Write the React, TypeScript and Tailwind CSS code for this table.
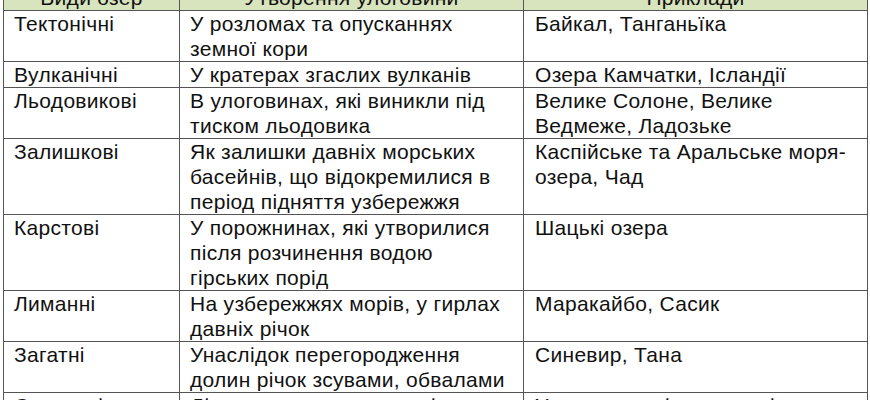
const rows: [string[], string[], string[]][] = [
  [["Тектонічні"], ["У розломах та опусканнях", "земної кори"], ["Байкал, Танганьїка"]],
  [["Вулканічні"], ["У кратерах згаслих вулканів"], ["Озера Камчатки, Ісландії"]],
  [["Льодовикові"], ["В улоговинах, які виникли під", "тиском льодовика"], ["Велике Солоне, Велике", "Ведмеже, Ладозьке"]],
  [["Залишкові"], ["Як залишки давніх морських", "басейнів, що відокремилися в", "період підняття узбережжя"], ["Каспійське та Аральське моря-", "озера, Чад"]],
  [["Карстові"], ["У порожнинах, які утворилися", "після розчинення водою", "гірських порід"], ["Шацькі озера"]],
  [["Лиманні"], ["На узбережжях морів, у гирлах", "давніх річок"], ["Маракайбо, Сасик"]],
  [["Загатні"], ["Унаслідок перегородження", "долин річок зсувами, обвалами"], ["Синевир, Тана"]],
  [["Старичні"], ["Ділянки старого русла річки"], ["У заплавах рівнинних річок"]],
];

function Lines({ lines }: { lines: string[] }) {
  return (
    <>
      {lines.map((l, i) => (
        <div key={i} className="whitespace-nowrap">{l}</div>
      ))}
    </>
  );
}

export default function App() {
  return (
    <div className="w-[870px] h-[400px] overflow-hidden bg-white pl-[3px]">
      <table
        className="-mt-[16px] border-collapse text-[21px] leading-[25px] tracking-[0.3px] text-[#111111]"
        style={{ fontFamily: '"Liberation Sans", Arial, sans-serif' }}
      >
        <colgroup>
          <col className="w-[176px]" />
          <col className="w-[344px]" />
          <col className="w-[344px]" />
        </colgroup>
        <thead>
          <tr className="bg-[#d7e4bd]">
            <th className="border border-[#555555] font-normal text-center p-0">Види озер</th>
            <th className="border border-[#555555] font-normal text-center p-0">Утворення улоговини</th>
            <th className="border border-[#555555] font-normal text-center p-0">Приклади</th>
          </tr>
        </thead>
        <tbody>
          {rows.map(([a, b, c], i) => (
            <tr key={i}>
              <td className="border border-[#555555] align-top pl-[10px] p-0">
                <Lines lines={a} />
              </td>
              <td className="border border-[#555555] align-top pl-[10px] p-0">
                <Lines lines={b} />
              </td>
              <td className="border border-[#555555] align-top pl-[11px] p-0">
                <Lines lines={c} />
              </td>
            </tr>
          ))}
        </tbody>
      </table>
    </div>
  );
}
